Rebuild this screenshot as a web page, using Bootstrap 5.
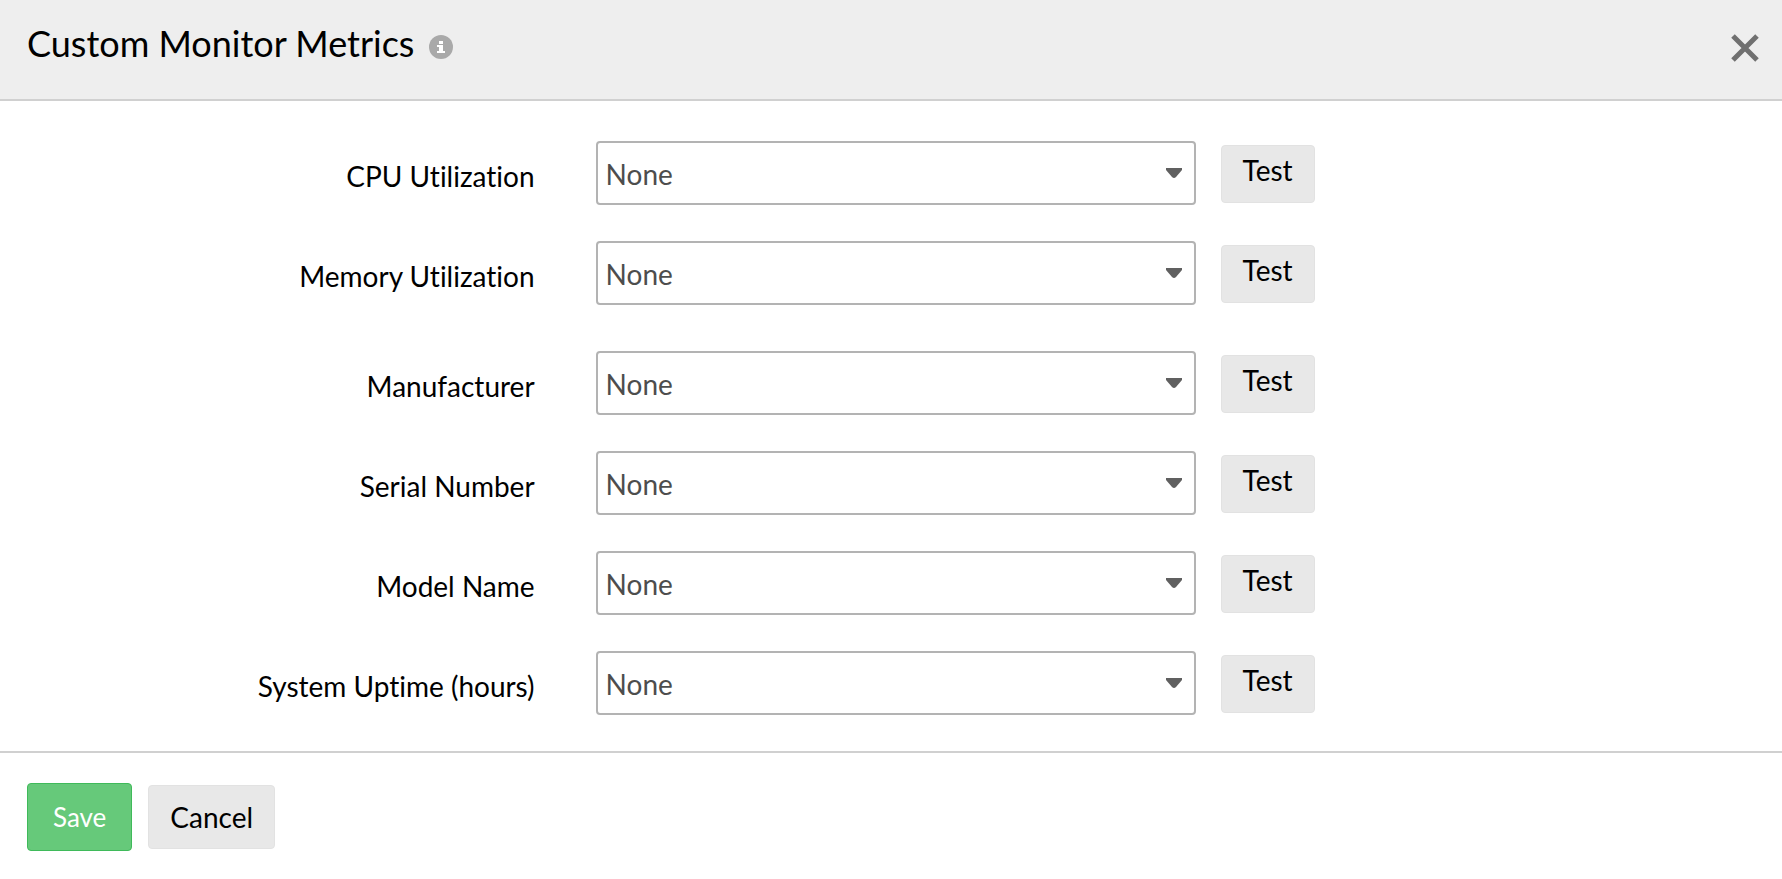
<!DOCTYPE html>
<html lang="en">
<head>
<meta charset="utf-8">
<meta name="viewport" content="width=device-width, initial-scale=1">
<title>Custom Monitor Metrics</title>
<link href="https://cdn.jsdelivr.net/npm/bootstrap@5.3.0/dist/css/bootstrap.min.css" rel="stylesheet">
<style>
  body { font-family: Lato, "Liberation Sans", sans-serif; font-size: 28px; line-height: 34px; font-variant-ligatures: none; color: #000; background: #fff; }
  .dialog-head { background: #eee; border-bottom: 2px solid #d0d0d0; padding: 21px 22px 34px 27px; }
  .dialog-title { font-size: 36px; line-height: 44px; font-weight: 400; }
  .info-btn { margin: 8px 0 0 15px; line-height: 0; }
  .close-btn { margin-top: 10px; line-height: 0; }
  .metric-list { padding: 40px 0 36px; display: grid; gap: 36px; }
  .metric-group { display: grid; gap: 36px; }
  .metric-group + .metric-group { margin-top: 10px; }
  .metric-label { flex: 0 0 30%; padding-top: 6px; }
  .metric-select { flex: 0 1 600px; min-width: 0; height: 64px; margin-left: 61px; padding: 1px 48px 0 8px; border: 2px solid #b3b3b3; border-radius: 4px; font-size: 28px; line-height: 34px; color: #4d4d4d;
    background-image: url("data:image/svg+xml,%3Csvg xmlns='http://www.w3.org/2000/svg' viewBox='0 0 16 10'%3E%3Cpath fill='%23606060' d='M0 0h16v2L10 9Q8 11 6 9L0 2z'/%3E%3C/svg%3E");
    background-size: 16px 10px; background-position: right 12px center; }
  .btn-plain { --bs-btn-bg: #e8e8e8; --bs-btn-border-color: #e2e2e2; --bs-btn-color: #000; --bs-btn-hover-bg: #ddd; --bs-btn-hover-color: #000; --bs-btn-hover-border-color: #d5d5d5; font-size: 28px; }
  .btn-save { --bs-btn-bg: #66c97a; --bs-btn-border-color: #3fba5a; --bs-btn-color: #fff; --bs-btn-hover-bg: #55bd6b; --bs-btn-hover-color: #fff; font-size: 26px; }
  .btn-plain, .btn-save { line-height: 34px; border-radius: 4px; }
  .test-btn { margin: 2px 0 0 25px; padding: 7px 21px 15px; }
  .dialog-foot { border-top: 2px solid #d0d0d0; padding: 30px 27px; gap: 16px; }
  .btn-save { padding: 16px 25px; }
  .cancel-btn { padding: 14px 21px; }
</style>
</head>
<body>
<header class="dialog-head d-flex justify-content-between align-items-center">
  <div class="d-flex align-items-center">
    <h1 class="dialog-title mb-0">Custom Monitor Metrics</h1>
    <button type="button" class="info-btn btn p-0 border-0" aria-label="About custom monitor metrics">
      <svg width="24" height="24" viewBox="0 0 24 24" aria-hidden="true"><circle cx="12" cy="12" r="12" fill="#a9a9a9"/><path fill="#fff" d="M10 6h4v3h-4zM8 10h6v6h2v2H8v-2h2v-4H8z"/></svg>
    </button>
  </div>
  <button type="button" class="close-btn btn p-0 border-0" aria-label="Close">
    <svg width="30" height="30" viewBox="0 0 30 30" aria-hidden="true"><path d="M3 3l24 24M27 3L3 27" stroke="#707070" stroke-width="5"/></svg>
  </button>
</header>
<form>
  <main class="metric-list">
    <div class="metric-group">
      <div class="d-flex align-items-center">
        <label class="metric-label text-end" for="cpu">CPU Utilization</label>
        <select class="metric-select form-select" id="cpu"><option>None</option></select>
        <button type="button" class="btn btn-plain test-btn">Test</button>
      </div>
      <div class="d-flex align-items-center">
        <label class="metric-label text-end" for="memory">Memory Utilization</label>
        <select class="metric-select form-select" id="memory"><option>None</option></select>
        <button type="button" class="btn btn-plain test-btn">Test</button>
      </div>
    </div>
    <div class="metric-group">
      <div class="d-flex align-items-center">
        <label class="metric-label text-end" for="maker">Manufacturer</label>
        <select class="metric-select form-select" id="maker"><option>None</option></select>
        <button type="button" class="btn btn-plain test-btn">Test</button>
      </div>
      <div class="d-flex align-items-center">
        <label class="metric-label text-end" for="serial">Serial Number</label>
        <select class="metric-select form-select" id="serial"><option>None</option></select>
        <button type="button" class="btn btn-plain test-btn">Test</button>
      </div>
      <div class="d-flex align-items-center">
        <label class="metric-label text-end" for="model">Model Name</label>
        <select class="metric-select form-select" id="model"><option>None</option></select>
        <button type="button" class="btn btn-plain test-btn">Test</button>
      </div>
      <div class="d-flex align-items-center">
        <label class="metric-label text-end" for="uptime">System Uptime (hours)</label>
        <select class="metric-select form-select" id="uptime"><option>None</option></select>
        <button type="button" class="btn btn-plain test-btn">Test</button>
      </div>
    </div>
  </main>
  <footer class="dialog-foot d-flex align-items-center">
    <button type="submit" class="btn btn-save">Save</button>
    <button type="button" class="btn btn-plain cancel-btn">Cancel</button>
  </footer>
</form>
<script src="https://cdn.jsdelivr.net/npm/bootstrap@5.3.0/dist/js/bootstrap.bundle.min.js"></script>
</body>
</html>
